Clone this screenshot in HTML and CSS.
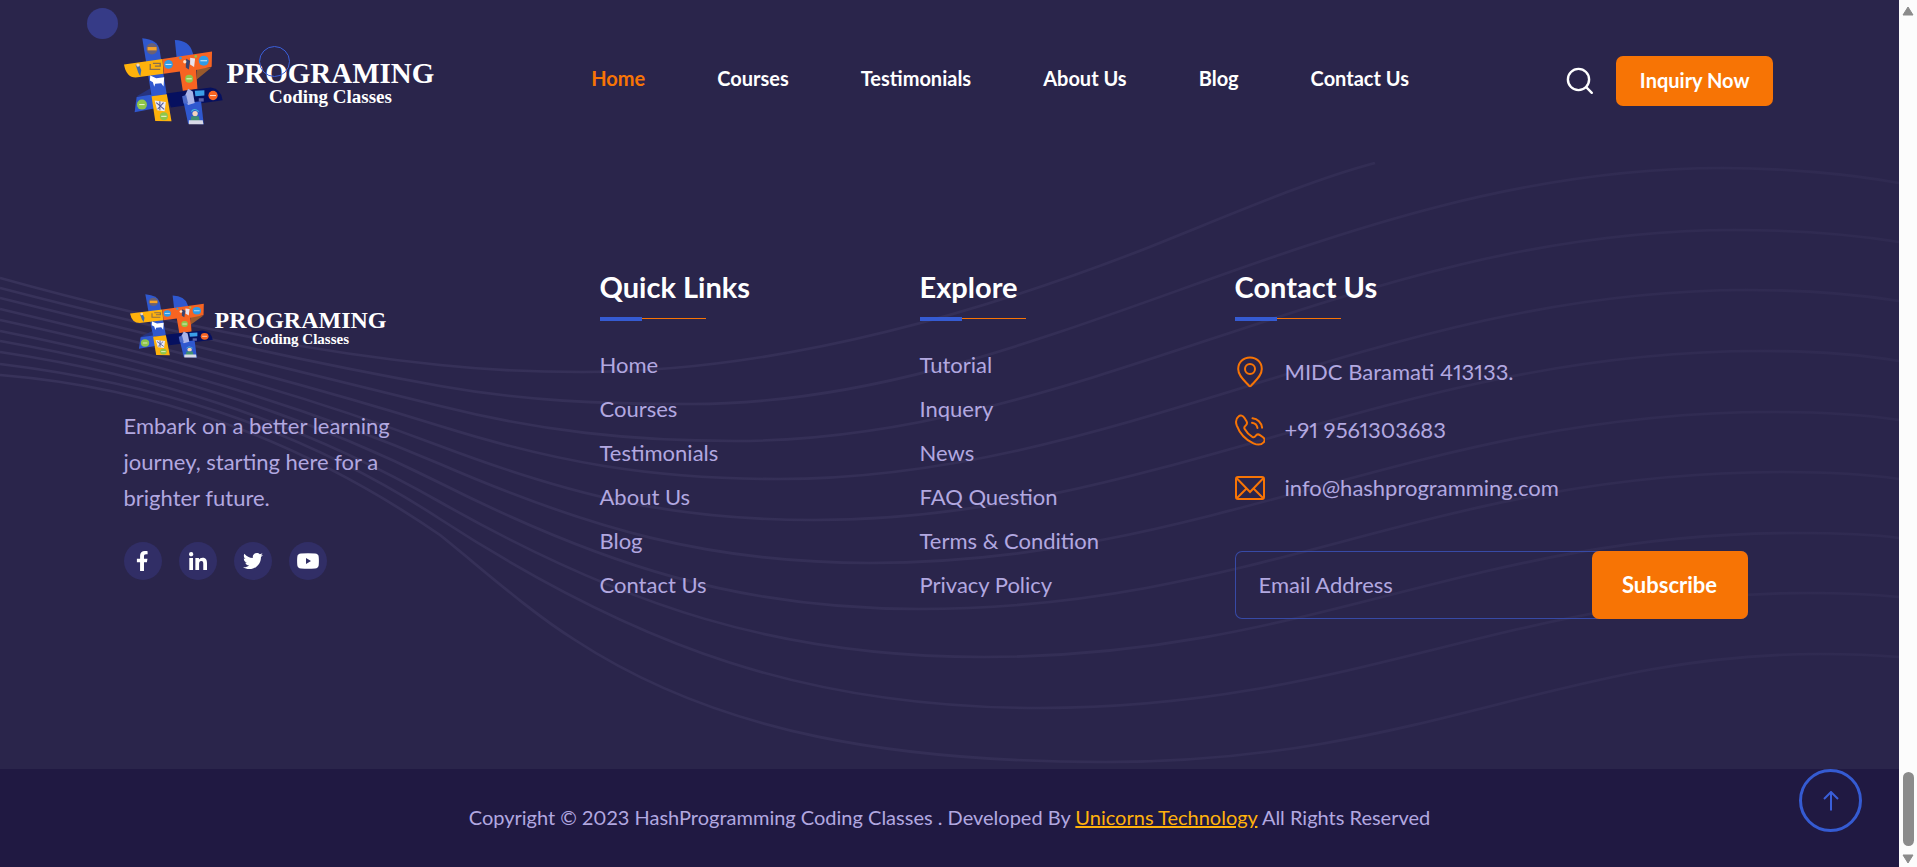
FILE: index.html
```
<!DOCTYPE html>
<html lang="en">
<head>
<meta charset="utf-8">
<title>Programing Coding Classes</title>
<link rel="stylesheet" href="styles.css">
</head>
<body>
<svg class="defs" aria-hidden="true">
  <symbol id="mark" viewBox="165 116 298 260" preserveAspectRatio="none">
    <path fill="#9a5a2c" d="M384 205l44-1-44 36z"/>
    <path fill="#26337f" d="M203 290l42-24v30z"/>
    <path fill="#2f58cf" d="M220 117q46 4 52 34l22 135-46 4z"/>
    <path fill="#2f58cf" d="M318 122q44 2 53 36l14 40-58 12z"/>
    <path fill="#2f58cf" d="M203 292l52-8 4 42-62 12z"/>
    <path fill="#ffb20c" d="M165 195l116-16 3 44-84 11q-28 0-35-39z"/>
    <path fill="#f76422" d="M281 179l149-23-1 46-47 10 4 56-44 6-9-58-48 7z"/>
    <path fill="#06105f" d="M292 282l134-18q32 4 36 38l-156 22z"/>
    <path fill="#2f58cf" d="M345 310l52-5 8 69-47-2z"/>
    <path fill="#ffb20c" d="M248 290l46-6 14 81-49-1z"/>
    <circle cx="249" cy="148" r="17" fill="#6b6175"/><path fill="#f5a32a" d="M236 143h27v10h-27z"/>
    <circle cx="299" cy="195" r="13" fill="#2f9be8"/><path stroke="#d8ecfa" stroke-width="3" d="M290 195h18"/>
    <circle cx="405" cy="184" r="15" fill="#2f9be8"/><path stroke="#d8ecfa" stroke-width="3" d="M395 184h20"/>
    <circle cx="361" cy="238" r="12" fill="#8fc64a"/><path stroke="#eef7dd" stroke-width="3" d="M353 238h16"/>
    <circle cx="219" cy="315" r="15" fill="#8fc64a"/><path stroke="#eef7dd" stroke-width="3" d="M211 315h16"/>
    <circle cx="285" cy="350" r="12" fill="#8fc64a"/><path stroke="#eef7dd" stroke-width="3" d="M277 350h16"/>
    <circle cx="433" cy="288" r="14" fill="#f76422"/><path stroke="#fde1d2" stroke-width="3" d="M424 288h18"/>
    <path fill="#fff" d="M244 228l18 8 24-3-2 28-7-10-18 2-3 9-4-14-9-5z"/>
    <path fill="none" stroke="#8a6f4d" stroke-width="4" d="M244 194v16h30M252 192h22v8h-16"/>
    <path fill="#3a6ab0" d="M200 196h10l7 16-3 18-6-10z"/><circle cx="207" cy="197" r="5" fill="#f6d9c0"/>
    <path fill="#e7e2ee" d="M364 175l15 2-3 26-12-8z"/><path fill="#3b4470" d="M352 178l12 6-4 26-9-6z"/>
    <circle cx="335" cy="176" r="4" fill="#2f9be8"/><circle cx="348" cy="187" r="5" fill="#ffe2c9"/><circle cx="381" cy="171" r="4" fill="#8fc64a"/>
    <path fill="#aab4e8" d="M358 268l14 8 6 34-20 6-14-18z"/><path fill="#4b69c8" d="M340 290l12-4 6 26h-14z"/>
    <path fill="#3b9fe8" d="M378 274l29-2v16l-27 2z"/><path fill="#5961a8" d="M390 296h15v10h-15z"/>
    <path fill="#e9e7f4" d="M257 303l34 4-4 28-22-3z"/><path fill="none" stroke="#4d5590" stroke-width="3" d="M262 309l24 20M284 309l-18 20M273 305v27"/>
    <circle cx="379" cy="342" r="8" fill="#f2d4bd"/><path fill="#3f8f72" d="M368 350h22l3 14h-28z"/><path fill="#d8d9e6" d="M360 362h42l2 12h-44z"/>
    <path stroke="#47b8d8" stroke-width="3" fill="none" d="M368 336q8-12 22 0"/>
  </symbol>
</svg>

<div class="viewport">
  <div class="page">
    <header class="header">
      <div class="container header-row">
        <a class="logo" href="#">
          <svg class="logo-mark" aria-hidden="true"><use href="#mark"/></svg>
          <span class="logo-text"><span class="logo-name">PROGRAMING</span><span class="logo-sub">Coding Classes</span></span>
        </a>
        <nav class="nav" aria-label="Main">
          <a class="active" href="#">Home</a>
          <a href="#">Courses</a>
          <a href="#">Testimonials</a>
          <a href="#">About Us</a>
          <a href="#">Blog</a>
          <a href="#">Contact Us</a>
        </nav>
        <div class="actions">
          <button class="search" type="button" aria-label="Search">
            <svg viewBox="0 0 28 28" width="28" height="28" fill="none" stroke="#fff" stroke-width="2.4" stroke-linecap="round"><circle cx="12.5" cy="12.5" r="10.6"/><path d="M20.2 20.2l5.6 5.6"/></svg>
          </button>
          <button class="inquiry" type="button">Inquiry Now</button>
        </div>
      </div>
      <span class="cursor-dot"></span>
      <span class="cursor-ring"></span>
    </header>

    <footer class="footer">
      <svg class="waves" viewBox="0 162 1899 607" preserveAspectRatio="none" aria-hidden="true">
        <defs><linearGradient id="fade" gradientUnits="userSpaceOnUse" x1="0" y1="0" x2="1899" y2="0"><stop offset="0" stop-color="#b2a8e0" stop-opacity=".1"/><stop offset=".55" stop-color="#b2a8e0" stop-opacity=".07"/><stop offset="1" stop-color="#b2a8e0" stop-opacity=".04"/></linearGradient></defs>
        <g fill="none" stroke="url(#fade)" stroke-width="2.6">
          <path d="M0 278C147 319 293 350 440 365C487 370 530 372 582 372C790 372 1000 305 1142 250C1230 215 1310 180 1375 163"/>
          <path d="M0 288C147 326 293 360 440 386C524 401 600 404 692 404C1040 404 1330 168 1723 168C1783 168 1850 174 1899 183"/>
          <path d="M0 298C147 335 293 369 440 406C540 431 630 441 735 441C1080 441 1355 230 1735 230C1795 230 1850 234 1899 242"/>
          <path d="M0 309C147 344 293 380 440 426C555 462 650 479 778 479C1120 479 1380 290 1747 290C1805 290 1855 294 1899 301"/>
          <path d="M0 320C147 352 293 390 440 446C570 495 670 520 814 520C1155 520 1395 351 1760 351C1812 351 1858 354 1899 361"/>
          <path d="M0 331C147 360 293 401 440 464C590 529 710 563 870 563C1210 563 1420 412 1772 412C1820 412 1860 414 1899 420"/>
          <path d="M0 341C147 367 293 409 440 483C605 566 740 609 919 609C1260 609 1430 472 1784 472C1830 472 1865 474 1899 479"/>
          <path d="M0 352C147 374 293 418 440 502C625 607 780 657 984 657C1310 657 1470 533 1796 533C1840 533 1870 534 1899 538"/>
          <path d="M0 364C147 382 293 423 440 519C640 649 810 708 1040 708C1355 708 1510 593 1808 593C1845 593 1870 594 1899 597"/>
          <path d="M0 375C147 387 293 434 440 535C480 567 530 612 575 640C720 735 900 762 1106 762C1420 762 1560 654 1820 654C1850 654 1875 655 1899 657"/>
        </g>
      </svg>
      <div class="container footer-grid">
        <section class="about">
          <a class="logo logo-small" href="#">
            <svg class="logo-mark" aria-hidden="true"><use href="#mark"/></svg>
            <span class="logo-text"><span class="logo-name">PROGRAMING</span><span class="logo-sub">Coding Classes</span></span>
          </a>
          <p class="blurb">Embark on a better learning journey, starting here for a brighter future.</p>
          <div class="social">
            <a href="#" aria-label="Facebook"><svg viewBox="0 0 320 512" height="20"><path d="M279.14 288l14.22-92.66h-88.91v-60.13c0-25.35 12.42-50.06 52.24-50.06h40.42V6.26S260.43 0 225.36 0c-73.22 0-121.08 44.38-121.08 124.72v70.62H22.89V288h81.39v224h100.17V288z"/></svg></a>
            <a href="#" aria-label="LinkedIn"><svg viewBox="0 0 448 448" height="18"><path d="M100.28 448H7.4V148.9h92.88zM53.79 108.1C24.09 108.1 0 83.5 0 53.8a53.79 53.79 0 0 1 107.58 0c0 29.7-24.1 54.3-53.79 54.3zM447.9 448h-92.68V302.4c0-34.7-.7-79.2-48.29-79.2-48.29 0-55.69 37.7-55.69 76.7V448h-92.78V148.9h89.08v40.8h1.3c12.4-23.5 42.69-48.3 87.88-48.3 94 0 111.28 61.9 111.28 142.3V448z"/></svg></a>
            <a href="#" aria-label="Twitter"><svg viewBox="0 0 512 512" height="20"><path d="M459.37 151.716c.325 4.548.325 9.097.325 13.645 0 138.72-105.583 298.558-298.558 298.558-59.452 0-114.68-17.219-161.137-47.106 8.447.974 16.568 1.299 25.34 1.299 49.055 0 94.213-16.568 130.274-44.832-46.132-.975-84.792-31.188-98.112-72.772 6.498.974 12.995 1.624 19.818 1.624 9.421 0 18.843-1.3 27.614-3.573-48.081-9.747-84.143-51.98-84.143-102.985v-1.299c13.969 7.797 30.214 12.67 47.431 13.319-28.264-18.843-46.781-51.005-46.781-87.391 0-19.492 5.197-37.36 14.294-52.954 51.655 63.675 129.3 105.258 216.365 109.807-1.624-7.797-2.599-15.918-2.599-24.04 0-57.828 46.782-104.934 104.934-104.934 30.213 0 57.502 12.67 76.67 33.137 23.715-4.548 46.456-13.32 66.599-25.34-7.798 24.366-24.366 44.833-46.132 57.827 21.117-2.273 41.584-8.122 60.426-16.243-14.292 20.791-32.161 39.308-52.628 54.253z"/></svg></a>
            <a href="#" aria-label="YouTube"><svg viewBox="0 0 22 16" height="16"><path fill-rule="evenodd" d="M4 .6Q11 0 18 .6q3.400.2 3.700 3.200.4 4.200 0 8.400-.3 3-3.700 3.200-7 .6-14 0-3.400-.2-3.700-3.200-.4-4.200 0-8.400Q.6.800 4 .6zM9 5v6l5-3z"/></svg></a>
          </div>
        </section>

        <section>
          <h2 class="title">Quick Links</h2>
          <ul class="links">
            <li><a href="#">Home</a></li>
            <li><a href="#">Courses</a></li>
            <li><a href="#">Testimonials</a></li>
            <li><a href="#">About Us</a></li>
            <li><a href="#">Blog</a></li>
            <li><a href="#">Contact Us</a></li>
          </ul>
        </section>

        <section>
          <h2 class="title">Explore</h2>
          <ul class="links">
            <li><a href="#">Tutorial</a></li>
            <li><a href="#">Inquery</a></li>
            <li><a href="#">News</a></li>
            <li><a href="#">FAQ Question</a></li>
            <li><a href="#">Terms &amp; Condition</a></li>
            <li><a href="#">Privacy Policy</a></li>
          </ul>
        </section>

        <section class="contact">
          <h2 class="title">Contact Us</h2>
          <ul class="contact-list">
            <li><svg viewBox="0 0 30 32"><path d="M15 1.500C8.200 1.500 3.200 6.500 3.200 13c0 6.800 6 11.500 10.800 16.700q1 1 2 0C20.800 24.500 26.800 19.800 26.800 13 26.800 6.500 21.800 1.500 15 1.500z"/><circle cx="15" cy="13" r="5"/></svg><span>MIDC Baramati 413133.</span></li>
            <li><svg viewBox="0 0 30 32"><path d="M3.500 2.500C5.500.700 8 1.500 9.500 4l2 3.200c1 1.800.5 3.300-1 4.500-1.300 1-1.500 2-.8 3.300 2 3.600 4.500 6 7.600 7.800 1.300.7 2.400.4 3.200-.8 1.200-1.700 2.800-2 4.500-.9l3 2.100c2 1.500 2.200 3.500.6 5.200-2.500 2.700-6.400 2.600-10.200.9C10.500 25.700 4.500 18.800 1.700 11.300.500 7.800.900 4.600 3.500 2.500z"/><path stroke-linecap="round" d="M17.500 4.300c5 .4 9 4.300 9.600 9.400M17 8.800c3 .4 5 2.400 5.500 5.200"/></svg><span>+91 9561303683</span></li>
            <li><svg viewBox="0 0 30 32"><rect x="1" y="5" width="28" height="22" rx="2"/><path d="M1.500 6l13.500 14L28.500 6M1.500 26.500L11.500 16.500M28.500 26.500L18.500 16.500"/></svg><span>info@hashprogramming.com</span></li>
          </ul>
          <form class="subscribe">
            <input type="email" placeholder="Email Address" aria-label="Email Address">
            <button type="button">Subscribe</button>
          </form>
        </section>
      </div>
    </footer>

    <div class="copyright">
      <p>Copyright © 2023 HashProgramming Coding Classes . Developed By <a href="#">Unicorns Technology</a> All Rights Reserved</p>
      <button class="to-top" type="button" aria-label="Back to top">
        <svg viewBox="0 0 16 20" width="16" height="20" fill="none" stroke="#3a5fd9" stroke-width="2"><path d="M8 19.500V1.500M1 8l7-7 7 7"/></svg>
      </button>
    </div>
  </div>

  <div class="scrollbar" aria-hidden="true">
    <svg viewBox="0 0 12 10" width="12" height="10"><path d="M6 1l5 8H1z" fill="#8b8b8b" stroke="#8b8b8b" stroke-linejoin="round"/></svg>
    <span class="thumb"></span>
    <svg viewBox="0 0 12 10" width="12" height="10"><path d="M6 9l5-8H1z" fill="#8b8b8b" stroke="#8b8b8b" stroke-linejoin="round"/></svg>
  </div>
</div>
</body>
</html>
```
FILE: styles.css
```
* { box-sizing: border-box; }
body { margin: 0; background: #2a254b; color: #b2a8e0; font-family: Lato, "Open Sans", sans-serif; font-variant-numeric: proportional-nums; }
a { color: inherit; text-decoration: none; }
button { border: 0; font-family: inherit; cursor: pointer; }
ul { list-style: none; margin: 0; padding: 0; }
.defs { position: absolute; width: 0; height: 0; }

.viewport { display: flex; min-height: 100vh; }
.page { flex: 1; min-width: 0; display: flex; flex-direction: column; }
.container { width: 100%; max-width: 1700px; margin: 0 auto; padding: 0 26px 0 24px; }

.header { position: relative; background: #2a254b; }
.header-row { display: flex; align-items: center; justify-content: space-between; height: 162px; }
.logo { display: flex; align-items: center; color: #fff; font-family: "Liberation Serif", "Times New Roman", serif; font-weight: 700; }
.logo-mark { width: 99px; height: 87px; }
.logo-text { display: flex; flex-direction: column; align-items: center; padding: 6px 0 0 4px; }
.logo-name { font-size: 29px; line-height: 26px; }
.logo-sub { font-size: 19px; line-height: 22px; }
.logo-small { margin: 6px 0 0 6px; }
.logo-small .logo-mark { width: 83px; height: 64px; }
.logo-small .logo-text { padding: 3px 0 0 2px; }
.logo-small .logo-name { font-size: 24px; line-height: 22px; }
.logo-small .logo-sub { font-size: 15px; line-height: 16px; }

.nav { display: flex; gap: 72px; padding-bottom: 6px; color: #fff; font-size: 20px; font-weight: 700; line-height: 24px; }
.nav .active { color: #f77405; }
.actions { display: flex; align-items: center; gap: 22px; }
.search { display: flex; padding: 0; background: none; }
.inquiry { height: 50px; padding: 0 24px 2px; border-radius: 7px; background: #f77405; color: #fff; font-size: 20px; font-weight: 700; }
.cursor-dot, .cursor-ring { position: absolute; width: 31px; height: 31px; border-radius: 50%; pointer-events: none; }
.cursor-dot { left: 87px; top: 8px; background: #363b87; }
.cursor-ring { left: 259px; top: 46px; border: 1px solid #3a5fd9; }

.footer { position: relative; flex: 1; }
.waves { position: absolute; inset: 0; width: 100%; height: 100%; }
.footer-grid { position: relative; display: grid; grid-template-columns: 476fr 320fr 315fr 539fr; padding-top: 108px; padding-bottom: 120px; }
.about { padding-top: 18px; }
.blurb { max-width: 300px; margin: 50px 0 26px; font-size: 22px; line-height: 36px; }
.social { display: flex; gap: 17px; }
.social a { display: grid; place-items: center; width: 38px; height: 38px; border-radius: 50%; background: #312e66; }
.social svg { fill: #fff; }

.title { position: relative; margin: 0; padding-bottom: 17px; color: #fff; font-size: 29px; font-weight: 700; line-height: 34px; }
.title::before, .title::after { content: ""; position: absolute; left: 0; }
.title::before { bottom: 2px; width: 106px; height: 1px; background: #f77405; }
.title::after { bottom: 0; width: 42px; height: 4px; background: #355bd2; }
.links { padding-top: 22px; font-size: 22px; line-height: 44px; }
.contact-list { display: grid; gap: 26px; padding-top: 35px; font-size: 22px; line-height: 32px; }
.contact-list li { display: flex; align-items: center; gap: 20px; }
.contact-list svg { width: 30px; height: 32px; fill: none; stroke: #f77405; stroke-width: 2; }
.subscribe { display: flex; height: 68px; margin: 47px 26px 0 0; border-radius: 7px; box-shadow: inset 0 0 0 1px #374aa6; }
.subscribe input { flex: 1; min-width: 0; padding: 0 24px 2px; border: 0; outline: 0; background: none; color: #b2a8e0; font-family: inherit; font-size: 22px; }
.subscribe input::placeholder { color: #b2a8e0; opacity: 1; }
.subscribe button { width: 156px; padding: 0 0 2px; border-radius: 7px; background: #f77405; color: #fff; font-size: 22px; font-weight: 700; }

.copyright { position: relative; display: flex; align-items: center; justify-content: center; height: 98px; background: #201942; }
.copyright p { margin: 0; padding-bottom: 2px; font-size: 20px; line-height: 28px; }
.copyright a { color: #ffb20c; text-decoration: underline; text-decoration-thickness: 2px; }
.to-top { position: absolute; right: 37px; top: 0; display: grid; place-items: center; width: 63px; height: 63px; padding: 0; border: 3px solid #355bd2; border-radius: 50%; background: none; }

.scrollbar { display: flex; flex-direction: column; align-items: center; width: 18px; padding: 6px 0 3px; background: #fcfcfc; }
.thumb { width: 11px; height: 74px; margin: auto 0 8px; border-radius: 6px; background: #8b8b8b; }
```
